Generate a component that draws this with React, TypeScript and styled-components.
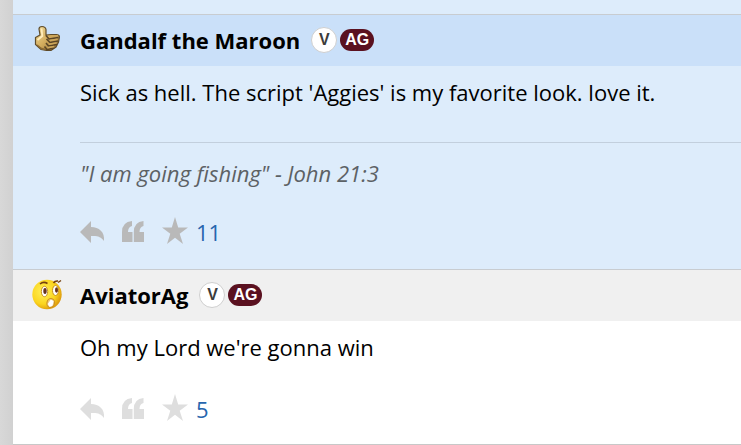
import React from "react";
import styled, { createGlobalStyle } from "styled-components";

const GlobalStyle = createGlobalStyle`
  * { box-sizing: border-box; }
  body {
    margin: 0;
    background: #d5d5d5;
    color: #000;
    font-family: "Open Sans", "Noto Sans", sans-serif;
    font-size: 22px;
    line-height: 30px;
  }
`;

const Page = styled.main`
  min-height: 100vh;
  padding-left: 13px;
  background: linear-gradient(to right, #d8d8d8, #d1d1d1 13px);
`;

const Thread = styled.div`
  min-height: 100vh;
  background: #fff;
  border-bottom: 1px solid #c8c8c8;
`;

const PreviousPost = styled.div`
  height: 14px;
  background: #ddecfb;
`;

const Post = styled.article<{ $own?: boolean }>`
  border-top: 1px solid #c8ccd0;
  background: ${(p) => (p.$own ? "#ddecfb" : "#fff")};
`;

const PostHeader = styled.header<{ $own?: boolean }>`
  display: flex;
  align-items: center;
  height: 51px;
  padding: 0 0 2px 16px;
  background: ${(p) => (p.$own ? "#cae0f9" : "#f0f0f0")};
`;

const Mood = styled.svg`
  flex: none;
  width: 36px;
  height: 36px;
  margin-right: 15px;
`;

const Author = styled.h2`
  margin: 0 11px 0 0;
  font-size: 22px;
  line-height: 30px;
  font-weight: 700;
`;

const Badge = styled.span<{ $kind: "verified" | "school" }>`
  display: inline-flex;
  align-items: center;
  justify-content: center;
  width: ${(p) => (p.$kind === "school" ? 34 : 26)}px;
  height: ${(p) => (p.$kind === "school" ? 22 : 26)}px;
  margin-right: 3px;
  border: ${(p) => (p.$kind === "school" ? "0" : "1px solid #cfcfcf")};
  border-radius: 13px;
  background: ${(p) => (p.$kind === "school" ? "#5a1120" : "#fff")};
  color: ${(p) => (p.$kind === "school" ? "#fff" : "#3c3c3c")};
  font-family: "Liberation Sans", Arial, sans-serif;
  font-size: 16px;
  line-height: 20px;
  font-weight: 700;
`;

const Content = styled.div<{ $signed?: boolean }>`
  padding: 11px 0 ${(p) => (p.$signed ? 2 : 0)}px 67px;
`;

const Message = styled.p`
  margin: 0;
  padding-bottom: 4px;
`;

const Signature = styled.p`
  margin: 31px 0 0;
  padding: 15px 0 1px;
  border-top: 1px solid #c2cfdd;
  color: #5c6165;
  font-style: italic;
`;

const Actions = styled.div<{ $color: string }>`
  display: flex;
  align-items: center;
  height: 56px;
  margin-top: 22px;
  padding-bottom: 16px;
  color: ${(p) => p.$color};
`;

const Action = styled.button`
  display: flex;
  margin-right: 16px;
  padding: 0;
  border: 0;
  background: none;
  color: inherit;
  cursor: pointer;

  &:last-of-type { margin-right: 7px; }
`;

const Icon = styled.svg`
  display: block;
  height: 28px;
  fill: currentColor;
`;

const Count = styled.a`
  padding-top: 2px;
  color: #2766ae;
  text-decoration: none;
`;

function ThumbMood() {
  return (
    <Mood viewBox="0 0 36 36" role="img" aria-label="Thumbs up">
      <defs>
        <linearGradient id="hand" x1="0" y1="0" x2="1" y2="1">
          <stop offset="0" stopColor="#f2dc9c" />
          <stop offset=".5" stopColor="#d3ad5e" />
          <stop offset="1" stopColor="#8a682f" />
        </linearGradient>
      </defs>
      <path d="M6.500 15.500 11 13 10 7Q10 4.500 13 4.500 16.500 4.500 17 7.500L17 13 22 12.500 28 12.500Q31 13 30.300 16L29.500 20 27 25 22 28.500 17.500 28.500 12 27.500 6.500 22.500Z" fill="url(#hand)" stroke="#5f4c2b" strokeWidth="1.200" />
      <path d="M17 13.500 20 17 29.500 15.500M17.500 17 21 20.500 29 19M17 21 19.500 24 28 22.500M15.500 24.500 18 27.500 25 26" fill="none" stroke="#5a4526" strokeWidth="1.600" />
      <path d="m20 14.800 9-1.300M21 18.500l7.500-1.300M20 22.200l7.500-1.300M18.500 25.800l6.500-1.300" stroke="#cda75c" strokeWidth="1.400" />
      <path d="M12.500 6.500 13.300 14 8.500 18" fill="none" stroke="#ffedbc" strokeWidth="1.800" />
      <path d="M8 23 12.500 26.500 17 27.500" fill="none" stroke="#8c6a32" strokeWidth="1.300" />
    </Mood>
  );
}

function WorriedMood() {
  return (
    <Mood viewBox="0 0 36 36" role="img" aria-label="Shocked">
      <defs>
        <radialGradient id="face" cx=".38" cy=".4" r=".65">
          <stop offset="0" stopColor="#fff25a" />
          <stop offset=".65" stopColor="#fbd51f" />
          <stop offset="1" stopColor="#dc980c" />
        </radialGradient>
      </defs>
      <circle cx="18" cy="17.500" r="14.700" fill="url(#face)" />
      <ellipse cx="15.500" cy="14.500" rx="3.200" ry="5.200" fill="#fff" stroke="#c7901d" />
      <ellipse cx="26.500" cy="13.500" rx="3" ry="5" fill="#fff" stroke="#c7901d" />
      <ellipse cx="16" cy="14" rx="1.700" ry="3" fill="#65331e" />
      <ellipse cx="27.500" cy="13" rx="1.500" ry="2.800" fill="#65331e" />
      <path d="M11 7Q14.500 4 18.500 6.500M24.500 6Q26 3.500 29 4M29 5.500 32 3.500" fill="none" stroke="#75400f" strokeWidth="1.500" />
      <ellipse cx="21.700" cy="26" rx="3.800" ry="4.500" fill="#ecc979" stroke="#cb8e22" transform="rotate(15 21.700 26)" />
      <path d="m18.800 27 3-4.500 2.800 1.500-1 4.500-3 1.500Z" fill="#fff" />
    </Mood>
  );
}

function PostActions({ color, stars }: { color: string; stars: number }) {
  return (
    <Actions $color={color}>
      <Action aria-label="Reply">
        <Icon width="25" viewBox="0 0 25 28">
          <path d="M0 15 11 4v6C19 10 25 15 24 24 21 19.500 17 18.500 11 19v7Z" />
        </Icon>
      </Action>
      <Action aria-label="Quote">
        <Icon width="24" viewBox="0 0 24 28">
          <path d="M11 4v5Q7 10 7 15H11.500v10H1V15Q1 5 11 4Zm11.500 0v5Q18.500 10 18.500 15H23v10H12.800V15Q12.800 5 22.500 4Z" />
        </Icon>
      </Action>
      <Action aria-label="Star">
        <Icon width="28" viewBox="0 0 28 28">
          <path d="m14 0 3.200 10.500H27l-8.300 6.300L22 27l-8-6.300L6 27l3.300-10.200L1 10.500h9.800Z" />
        </Icon>
      </Action>
      <Count href="#stars">{stars}</Count>
    </Actions>
  );
}

function AuthorBadges() {
  return (
    <>
      <Badge $kind="verified">V</Badge>
      <Badge $kind="school">AG</Badge>
    </>
  );
}

export default function App() {
  return (
    <Page>
      <GlobalStyle />
      <Thread>
        <PreviousPost />
        <Post $own>
          <PostHeader $own>
            <ThumbMood />
            <Author>Gandalf the Maroon</Author>
            <AuthorBadges />
          </PostHeader>
          <Content $signed>
            <Message>Sick as hell. The script 'Aggies' is my favorite look. love it.</Message>
            <Signature>"I am going fishing" - John 21:3</Signature>
            <PostActions color="#b9b9b9" stars={11} />
          </Content>
        </Post>
        <Post>
          <PostHeader>
            <WorriedMood />
            <Author>AviatorAg</Author>
            <AuthorBadges />
          </PostHeader>
          <Content>
            <Message>Oh my Lord we're gonna win</Message>
            <PostActions color="#dedede" stars={5} />
          </Content>
        </Post>
      </Thread>
    </Page>
  );
}
